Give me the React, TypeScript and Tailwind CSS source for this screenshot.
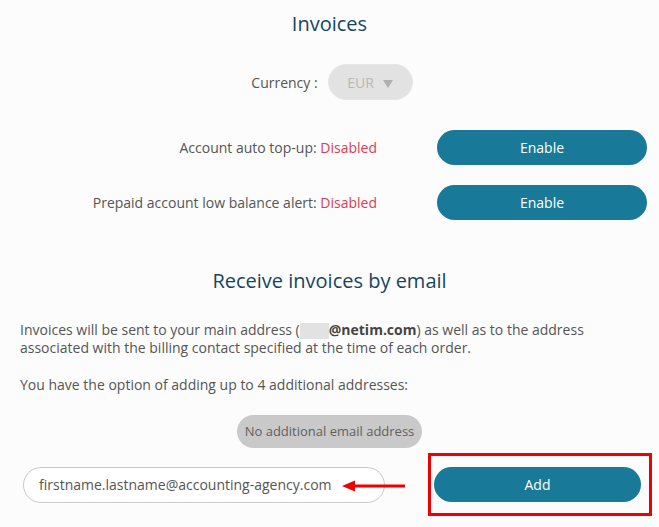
export default function App() {
  return (
    <div
      className="w-[659px] h-[527px] bg-[#fcfcfc] text-[#555] overflow-hidden"
      style={{ fontFamily: '"Open Sans", "Noto Sans", sans-serif' }}
    >
      <h2 className="pt-[11px] text-center text-[20px] leading-[26px] text-[#16465e]">
        Invoices
      </h2>

      <div className="mt-[27px] flex items-center justify-center gap-[10px] pl-[5px]">
        <span className="text-[14px] text-[#555]">Currency :</span>
        <div className="flex h-[36px] w-[85px] items-center justify-center gap-[9px] rounded-full border border-[#e6e6e6] bg-[#e2e2e2] text-[14px] text-[#b8b8b8]">
          <span>EUR</span>
          <span className="mt-[3px] h-0 w-0 border-x-[5px] border-t-[8px] border-x-transparent border-t-[#b0b0b0]"></span>
        </div>
      </div>

      <div className="mt-[30px] grid grid-cols-[377px_210px] items-center gap-x-[60px] gap-y-[20px]">
        <p className="text-right text-[14px]">
          Account auto top-up: <span className="text-[#e23a4f]">Disabled</span>
        </p>
        <button className="h-[35px] rounded-full bg-[#187a98] text-[14px] text-white">
          Enable
        </button>
        <p className="text-right text-[14px]">
          Prepaid account low balance alert:{' '}
          <span className="text-[#e23a4f]">Disabled</span>
        </p>
        <button className="h-[35px] rounded-full bg-[#187a98] text-[14px] text-white">
          Enable
        </button>
      </div>

      <h2 className="mt-[48px] text-center text-[20px] leading-[26px] text-[#16465e]">
        Receive invoices by email
      </h2>

      <div className="mt-[27px] px-[20px] text-[14px] leading-[18px]">
        <p>
          Invoices will be sent to your main address (
          <span className="inline-block h-[16px] w-[29px] align-middle bg-[#e2e2e2]"></span>
          <b className="text-[#444]">@netim.com</b>) as well as to the address
          associated with the billing contact specified at the time of each order.
        </p>
        <p className="mt-[19px]">
          You have the option of adding up to 4 additional addresses:
        </p>
      </div>

      <div className="mt-[21px] flex justify-center">
        <span className="flex h-[33px] w-[185px] items-center justify-center rounded-full bg-[#c9c9c9] text-[13px] text-[#606060]">
          No additional email address
        </span>
      </div>

      <div className="mt-[5px] flex items-center">
        <div className="relative ml-[23px] flex h-[36px] w-[362px] items-center rounded-full border border-[#c8c8c8] bg-white pl-[15px] text-[14px] text-[#555]">
          firstname.lastname@accounting-agency.com
          <svg
            className="absolute left-[318px] top-[12px]"
            width="64"
            height="12"
            viewBox="0 0 64 12"
          >
            <line x1="10" y1="6" x2="63" y2="6" stroke="#f20000" strokeWidth="3" />
            <polygon points="0,6 13,0.5 13,11.5" fill="#f20000" />
          </svg>
        </div>
        <div className="ml-[43px] flex h-[63px] w-[224px] items-center border-[3px] border-[#f20000] pl-[3px]">
          <button className="h-[35px] w-[207px] rounded-full bg-[#187a98] text-[14px] text-white">
            Add
          </button>
        </div>
      </div>
    </div>
  )
}
